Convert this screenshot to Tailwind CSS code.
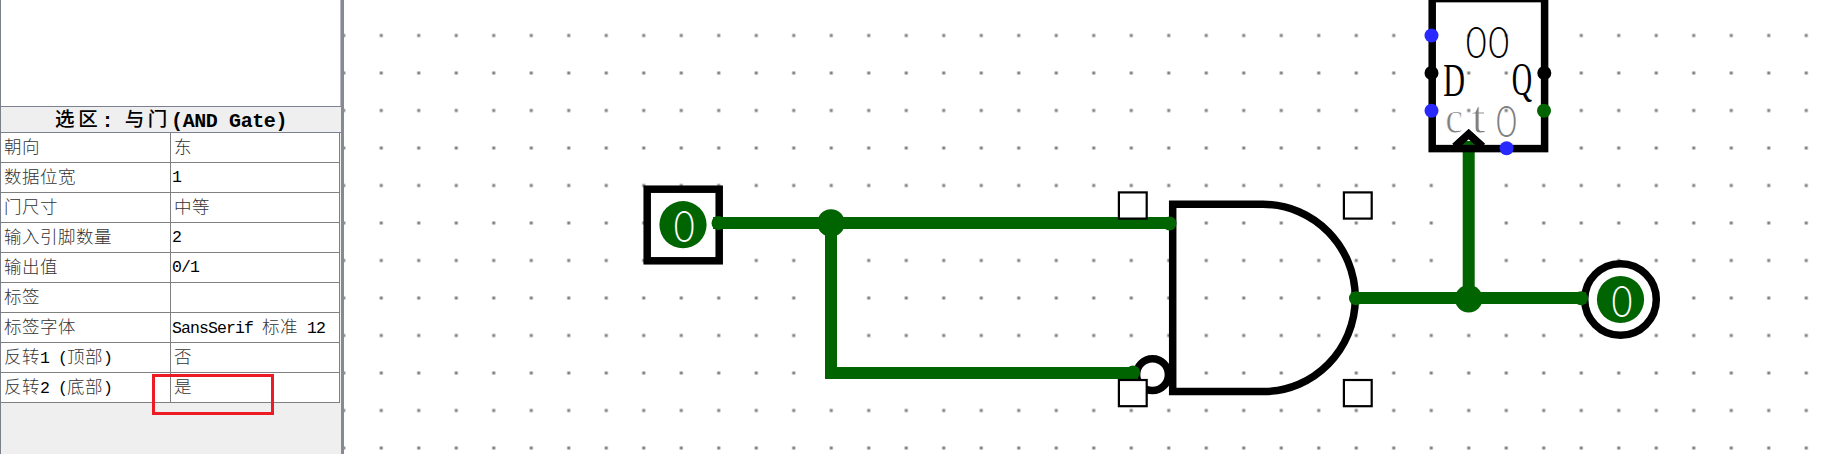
<!DOCTYPE html>
<html lang="zh">
<head>
<meta charset="utf-8">
<title>Logisim</title>
<script src="https://cdn.jsdelivr.net/npm/@tailwindcss/browser@4"></script>
</head>
<body class="w-[1823px] h-[454px] overflow-hidden bg-white">
<div class="relative flex w-[1823px] h-[454px]">
  <aside class="w-[344px] h-[454px] shrink-0 flex flex-col bg-[#efefef] border-l border-[#7a7f89] border-r-[3px] border-r-[#858a94] font-['Liberation_Mono','Noto_Sans_CJK_SC',monospace] text-[16.5px] tracking-[-0.9px] text-black">
    <div class="h-[106px] bg-white border-r border-[#b8bbc2]"></div>
    <h1 class="h-[27px] border-y border-[#7b8190] flex items-center whitespace-pre pt-[4px] pl-[54px] font-bold text-[20px] tracking-[-0.4px] leading-none"><span class="text-[19.5px] tracking-[3.7px] font-medium">选区</span>: <span class="text-[19.5px] tracking-[3.7px] font-medium">与门</span>(AND Gate)</h1>
    <div id="rows" class="w-[339px] border-r border-[#808080]"></div>
  </aside>
  <main class="flex-1 h-[454px]">
    <svg class="block" width="1479" height="454" viewBox="344 0 1479 454">
      <defs>
        <pattern id="grid" x="325" y="16.75" width="37.5" height="37.5" patternUnits="userSpaceOnUse"><rect x="17.25" y="17.25" width="3" height="3" fill="#808080"/></pattern>
      </defs>
      <rect x="344" width="1479" height="454" fill="url(#grid)"/>
      <path d="M1468.7 298V141" stroke="#006400" stroke-width="12"/>
      <g fill="none" stroke="#000" stroke-width="7.5">
        <rect x="647.2" y="189.2" width="72" height="71.6" fill="#fff"/>
        <path d="M1263 204.3H1172.7V391.6H1263C1314 391.6 1355.3 349.5 1355.3 298S1314 204.3 1263 204.3Z"/>
        <circle cx="1152.5" cy="374.7" r="15.9" fill="#fff"/>
        <circle cx="1620.5" cy="299.5" r="35.8" fill="#fff"/>
        <rect x="1432.2" y="-1.4" width="112.4" height="150"/>
        <path d="M1455 146.5L1468.7 134L1482.4 146.5"/>
      </g>
      <g fill="none" stroke="#006400" stroke-width="12">
        <path d="M713 223H1169M831 223V373H1138M1351 298H1586"/>
      </g>
      <g fill="#006400">
        <circle cx="683" cy="224.7" r="23.6"/>
        <circle cx="1620.5" cy="299.5" r="23.6"/>
        <circle cx="718.5" cy="223" r="7"/>
        <circle cx="831" cy="223" r="13.8"/>
        <circle cx="1169.5" cy="223.5" r="7"/>
        <circle cx="1133" cy="372.5" r="7"/>
        <circle cx="1356" cy="298.3" r="7"/>
        <circle cx="1581" cy="298.3" r="7"/>
        <circle cx="1468.7" cy="298.8" r="13.8"/>
        <circle cx="1544" cy="110.7" r="7"/>
      </g>
      <g fill="#2828ff">
        <circle cx="1431.5" cy="35.5" r="7"/><circle cx="1431.5" cy="110.7" r="7"/><circle cx="1506.6" cy="148.2" r="7"/>
      </g>
      <circle cx="1431.5" cy="73" r="7"/><circle cx="1544.3" cy="73" r="7"/>
      <g fill="#fff" stroke="#000" stroke-width="2.2">
        <rect x="1118.9" y="192.4" width="27.8" height="26.2"/>
        <rect x="1343.9" y="192.4" width="27.8" height="26.2"/>
        <rect x="1118.9" y="380" width="27.8" height="26.2"/>
        <rect x="1343.9" y="380" width="27.8" height="26.2"/>
      </g>
      <g class="font-['Lato','Liberation_Sans',sans-serif] font-light text-[43px]" text-anchor="middle">
        <text transform="translate(684.3 242) scale(.84 1)" fill="#fff">0</text>
        <text transform="translate(1622 317.3) scale(.84 1)" fill="#fff">0</text>
        <text transform="translate(1476.3 57.5) scale(.84 1)" letter-spacing="0">0</text>
        <text transform="translate(1498.8 57.5) scale(.84 1)">0</text>
        <text transform="translate(1506.5 137) scale(.84 1)" fill="#808080">0</text>
      </g>
      <g class="font-['Liberation_Serif',serif] text-[47px]" text-anchor="middle">
        <text transform="translate(1454 95.5) scale(.64 1)">D</text>
        <text transform="translate(1522 95) scale(.6 1)">Q</text>
        <text transform="translate(1454 132.5) scale(.85 1)" fill="#808080" stroke="#fff" stroke-width=".9">c</text>
        <text transform="translate(1478.5 132.5) scale(1.08 1)" fill="#808080" stroke="#fff" stroke-width=".9">t</text>
      </g>
      <path d="M1455 146.5L1468.7 134L1482.4 146.5" fill="none" stroke="#000" stroke-width="7.5"/>
    </svg>
  </main>
  <div class="absolute left-[152px] top-[374px] w-[122px] h-[41px] border-3 border-[#ed1c24]"></div>
</div>
<script>
const rows = [["朝向","东"],["数据位宽","1"],["门尺寸","中等"],["输入引脚数量","2"],["输出值","0/1"],["标签",""],["标签字体","SansSerif 标准 12"],["反转1 (顶部)","否"],["反转2 (底部)","是"]];
const fmt = s => s.replace(/[\u4e00-\u9fff]+/g, m => `<span class="text-[17.5px] tracking-[0.5px] font-light text-[#333]">${m}</span>`);
document.getElementById("rows").innerHTML = rows.map(([k, v]) =>
  `<div class="flex h-[30px] bg-white border-b border-[#808080] leading-[30px] whitespace-pre"><div class="w-[170px] h-[29px] overflow-hidden pl-[3px] border-r border-[#808080]">${fmt(k)}</div><div class="flex-1 h-[29px] overflow-hidden ${/^[\u4e00-\u9fff]/.test(v) ? "pl-[3px]" : "pl-[1px]"}">${fmt(v)}</div></div>`).join("");
</script>
</body>
</html>
